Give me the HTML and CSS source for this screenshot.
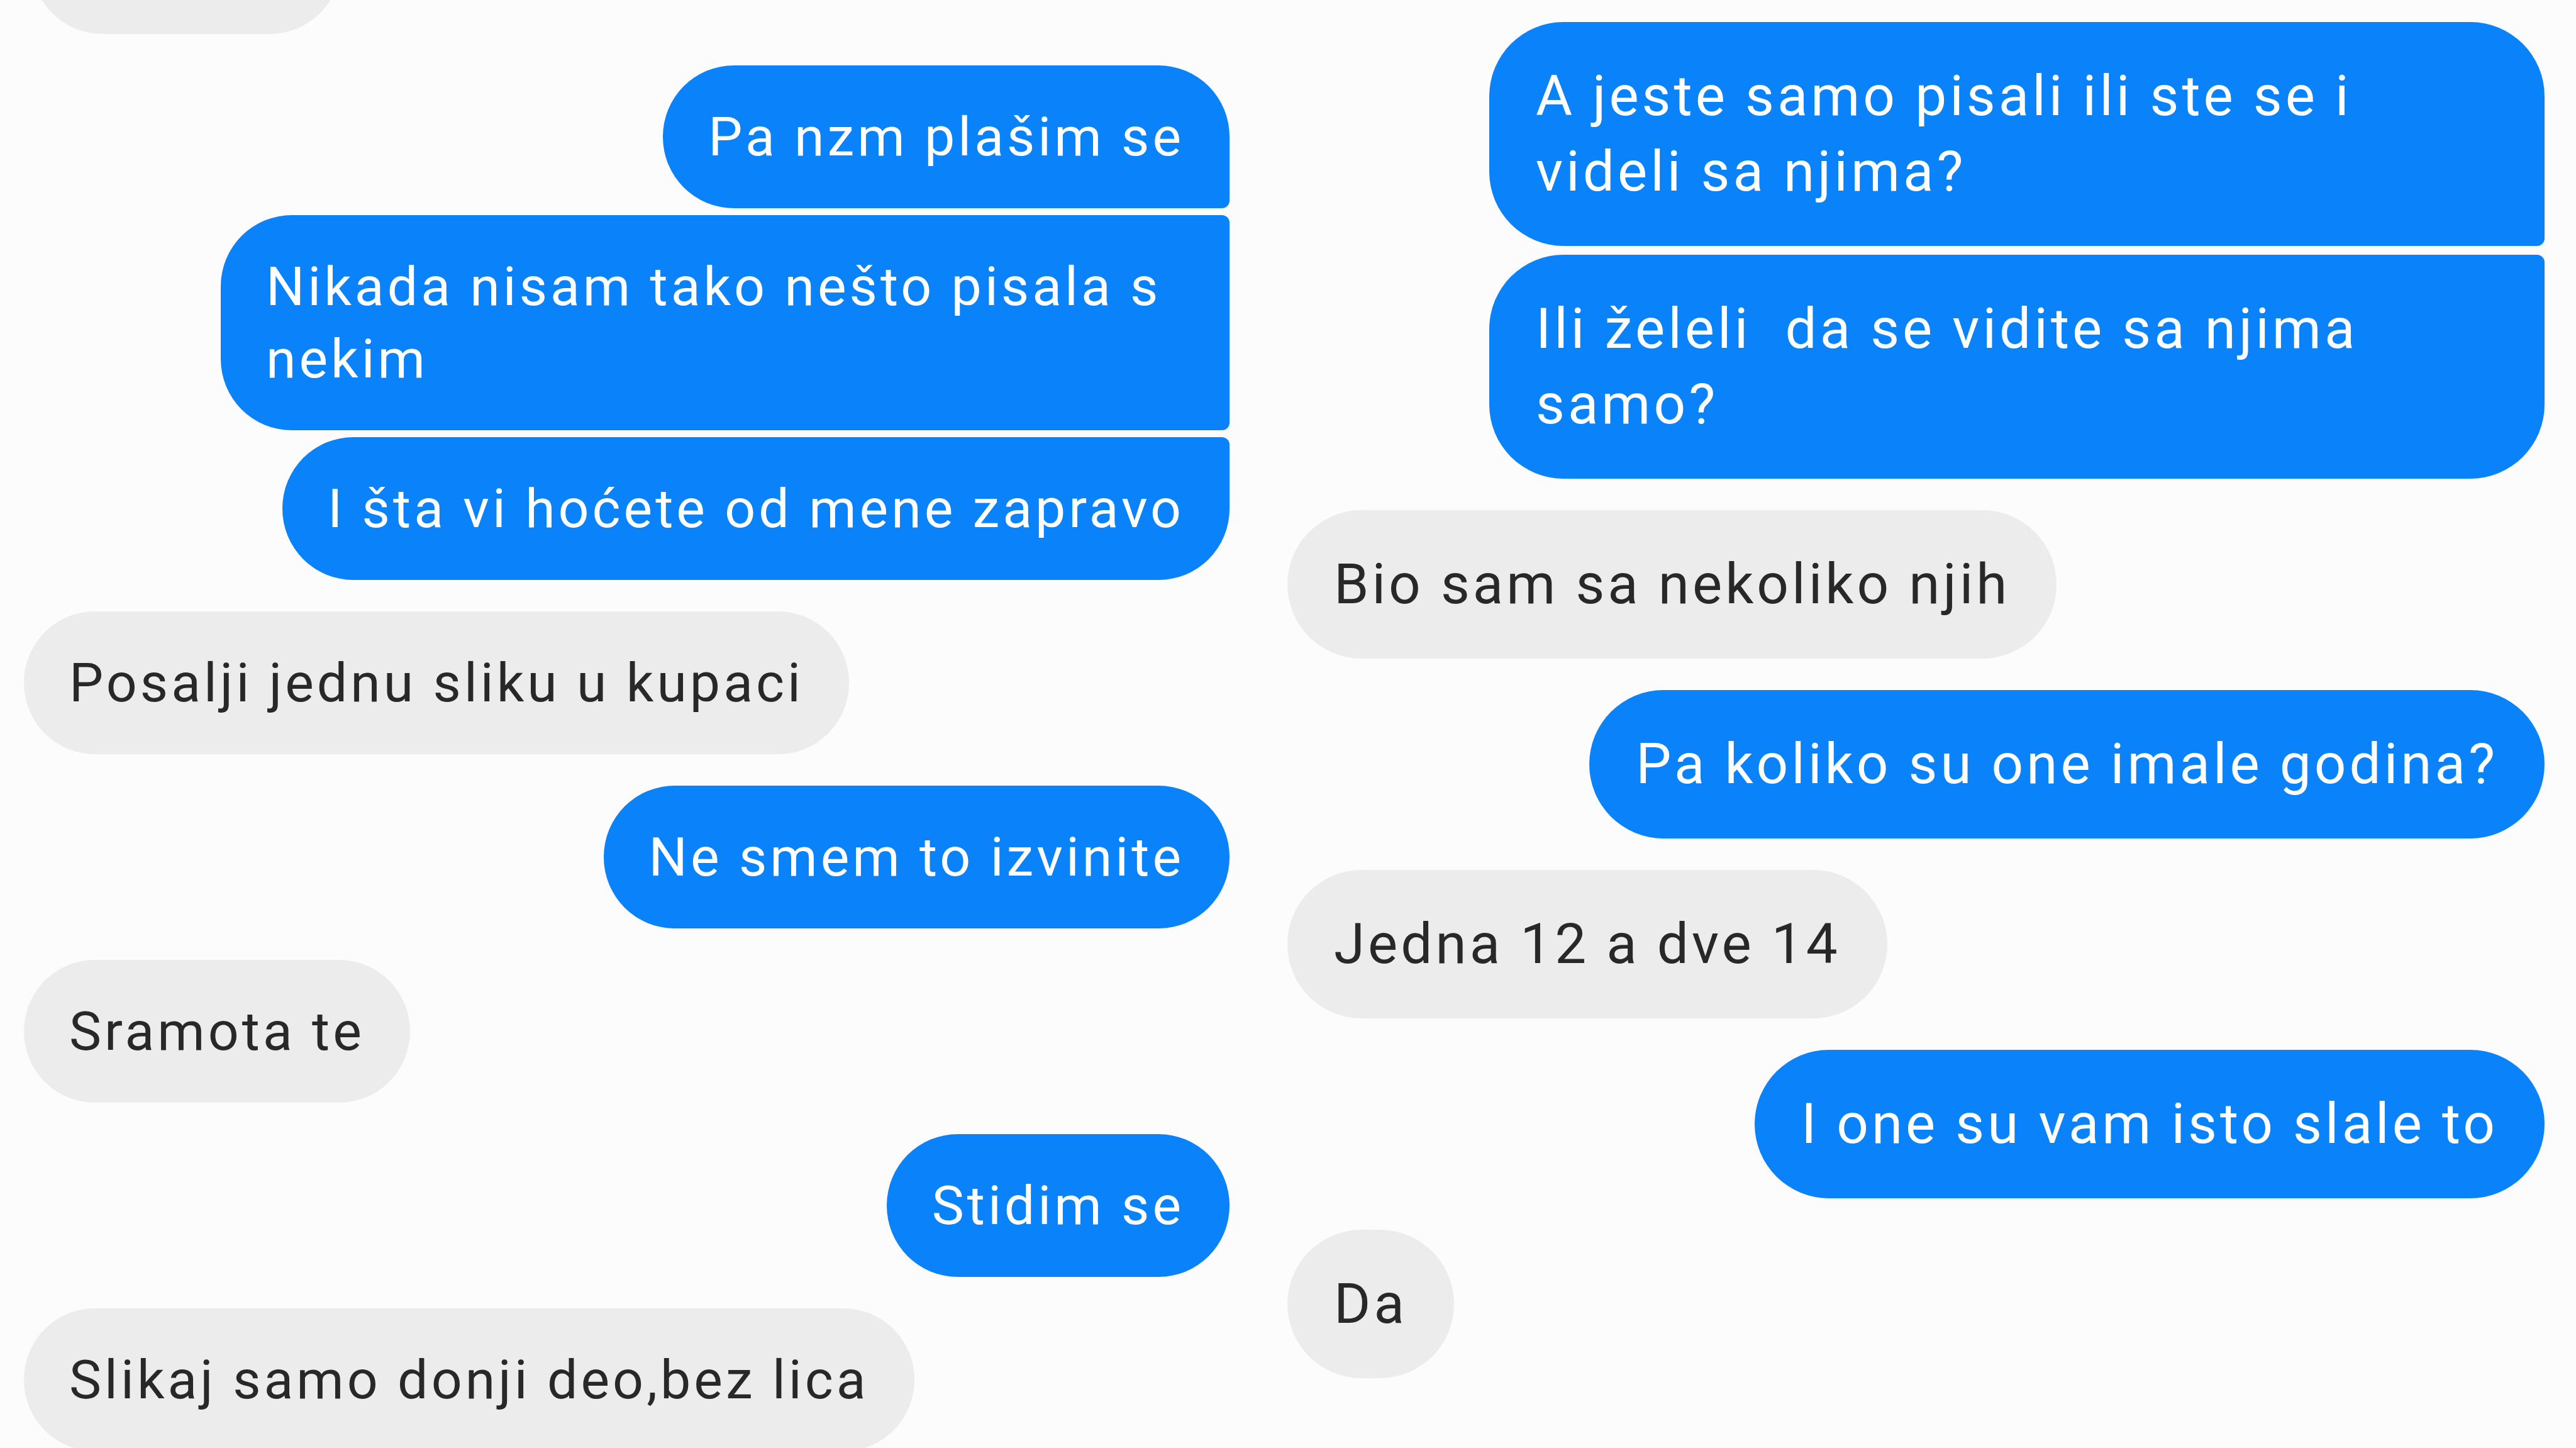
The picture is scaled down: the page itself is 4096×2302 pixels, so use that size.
FILE: index.html
```html
<!DOCTYPE html>
<html lang="sr">

<head>
  <meta charset="UTF-8" />
  <title>Poruke</title>
  <link rel="stylesheet" href="styles.css">
</head>

<body>
  <div class="chat">
    <div class="col col-left">
      <div class="msg them cut"></div>

      <div class="msg me first">Pa nzm plašim se</div>
      <div class="msg me mid">Nikada nisam tako nešto pisala s nekim</div>
      <div class="msg me last">I šta vi hoćete od mene zapravo</div>

      <div class="msg them">Posalji jednu sliku u kupaci</div>
      <div class="msg me">Ne smem to izvinite</div>
      <div class="msg them">Sramota te</div>
      <div class="msg me">Stidim se</div>
      <div class="msg them">Slikaj samo donji deo,bez lica</div>
    </div>

    <div class="col col-right">
      <div class="msg me first">A jeste samo pisali ili ste se i videli sa njima?</div>
      <div class="msg me last">Ili želeli&nbsp; da se vidite sa njima samo?</div>

      <div class="msg them">Bio sam sa nekoliko njih</div>
      <div class="msg me">Pa koliko su one imale godina?</div>
      <div class="msg them">Jedna 12 a dve 14</div>
      <div class="msg me">I one su vam isto slale to</div>
      <div class="msg them">Da</div>
    </div>
  </div>
</body>

</html>
```

FILE: styles.css
```css
html,
body {
  margin: 0;
  height: 100%;
}

body {
  font-family: Roboto, 'Noto Sans', sans-serif;
  background: #fcfcfc;
  overflow: hidden;
}

.chat {
  display: flex;
  gap: 92px;
  padding: 0 50px 0 38px;
}

.col {
  display: flex;
  flex-direction: column;
}

.col-left {
  width: 1917px;
}

.col-right {
  flex: 1;
  padding-top: 35px;
}

.msg {
  font-size: 86px;
  line-height: 115px;
  letter-spacing: 5px;
  padding: 56px 72px;
  border-radius: 113px;
  margin-top: 50px;
  box-sizing: border-box;
}

.col-left .msg {
  max-width: 1604px;
}

/* the right half was captured a little larger */
.col-right .msg {
  max-width: 1678px;
  font-size: 89px;
  line-height: 120px;
  padding: 58px 74px;
  border-radius: 118px;
}

.col > .msg:first-child {
  margin-top: 0;
}

.me {
  align-self: flex-end;
  background: #0a83fa;
  color: #fff;
}

.them {
  align-self: flex-start;
  background: #ececec;
  color: #282828;
}

/* grouped bubbles from the same sender */
.col .me.first {
  border-bottom-right-radius: 12px;
}

.col .me.mid {
  border-top-right-radius: 12px;
  border-bottom-right-radius: 12px;
  margin-top: 11px;
}

.col .me.last {
  border-top-right-radius: 12px;
  margin-top: 11px;
}

.col-right .me.last {
  margin-top: 14px;
}

.col > .msg.cut {
  width: 492px;
  height: 227px;
  margin-top: -173px;
  margin-left: 12px;
}
```
